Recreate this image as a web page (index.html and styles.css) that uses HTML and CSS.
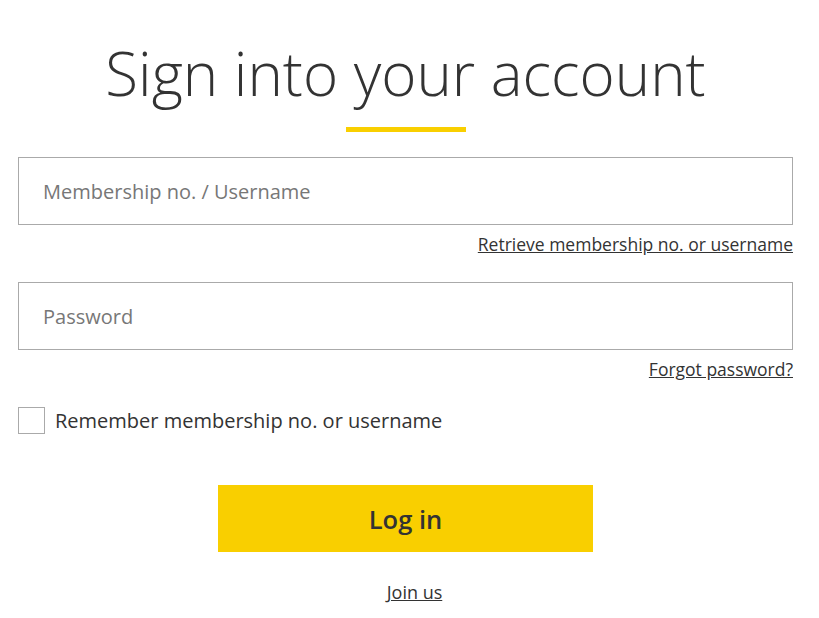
FILE: index.html
```html
<!DOCTYPE html>
<html lang="en">
<head>
<meta charset="utf-8">
<title>Sign into your account</title>
<link rel="stylesheet" href="styles.css">
</head>
<body>
<main class="login">
  <h1 class="title">Sign into your account</h1>
  <div class="title-bar"></div>
  <form class="form">
    <div class="field">
      <input class="input" type="text" placeholder="Membership no. / Username">
      <a class="help-link" href="#">Retrieve membership no. or username</a>
    </div>
    <div class="field">
      <input class="input" type="password" placeholder="Password">
      <a class="help-link" href="#">Forgot password?</a>
    </div>
    <label class="remember">
      <span class="checkbox"></span>
      <span class="remember-text">Remember membership no. or username</span>
    </label>
    <button class="btn" type="button">Log in</button>
    <a class="join" href="#">Join us</a>
  </form>
</main>
</body>
</html>
```
FILE: styles.css
```css
* { box-sizing: border-box; }
html, body { margin: 0; padding: 0; background: #fff; }
body {
  font-family: "Open Sans", "Liberation Sans", sans-serif;
  color: #333;
}
.login {
  width: 775px;
  margin-left: 18px;
  padding-top: 35px;
  display: flex;
  flex-direction: column;
  align-items: center;
}
.title {
  margin: 0;
  font-weight: 300;
  font-size: 60px;
  line-height: 76px;
  color: #333;
}
.title-bar {
  width: 120px;
  height: 5px;
  background: #f9cf00;
  margin-top: 16px;
}
.form {
  width: 100%;
  margin-top: 25px;
  display: flex;
  flex-direction: column;
}
.field {
  display: flex;
  flex-direction: column;
  align-items: flex-end;
  margin-bottom: 25px;
}
.input {
  width: 100%;
  height: 68px;
  border: 1px solid #aaa;
  border-radius: 0;
  padding: 0 24px;
  font-family: "Open Sans", "Liberation Sans", sans-serif;
  font-size: 20px;
  color: #333;
  outline: none;
}
.input::placeholder { color: #777; opacity: 1; }
.help-link {
  margin-top: 7px;
  font-size: 17.5px;
  line-height: 25px;
  color: #333;
  text-decoration: underline;
}
.remember {
  display: flex;
  align-items: center;
  gap: 10px;
  margin-top: 0;
}
.checkbox {
  width: 27px;
  height: 27px;
  border: 1px solid #aaa;
  background: #fff;
  flex: none;
}
.remember-text {
  font-size: 20px;
  line-height: 26px;
  color: #333;
}
.btn {
  align-self: center;
  width: 375px;
  height: 67px;
  margin-top: 51px;
  background: #f9cf00;
  border: none;
  border-radius: 0;
  font-family: "Open Sans", "Liberation Sans", sans-serif;
  font-size: 25.5px;
  font-weight: 600;
  color: #333;
}
.join {
  align-self: center;
  margin-top: 28px;
  margin-left: 18px;
  font-size: 18px;
  line-height: 24px;
  color: #333;
  text-decoration: underline;
}
```
